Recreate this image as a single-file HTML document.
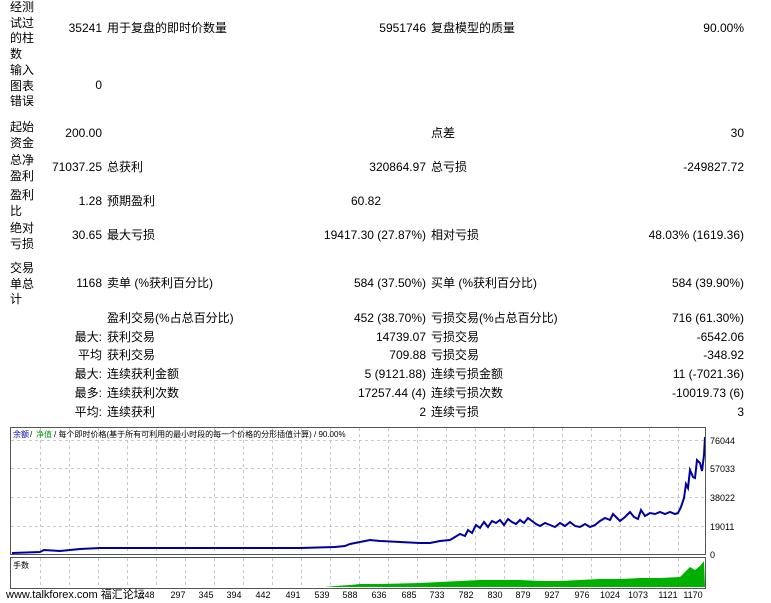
<!DOCTYPE html>
<html><head><meta charset="utf-8"><style>
body{margin:0;width:771px;height:603px;background:#fff;overflow:hidden;position:relative;font-family:"Liberation Sans","Noto Sans CJK SC",sans-serif;font-size:12px;color:#000}
div.t{position:absolute;white-space:nowrap;line-height:15px}
.r{text-align:right}
.s{font-size:9px;line-height:10px}
</style></head><body>
<div class="t" style="left:10px;top:0px;line-height:15.7px">经测<br>试过<br>的柱<br>数</div>
<div class="t r" style="right:669px;top:21px">35241</div>
<div class="t" style="left:107px;top:21px">用于复盘的即时价数量</div>
<div class="t r" style="right:345px;top:21px">5951746</div>
<div class="t" style="left:431px;top:21px">复盘模型的质量</div>
<div class="t r" style="right:27px;top:21px">90.00%</div>

<div class="t" style="left:10px;top:63px;line-height:15.5px">输入<br>图表<br>错误</div>
<div class="t r" style="right:669px;top:78px">0</div>

<div class="t" style="left:10px;top:119px;line-height:16px">起始<br>资金</div>
<div class="t r" style="right:669px;top:126px">200.00</div>
<div class="t" style="left:431px;top:126px">点差</div>
<div class="t r" style="right:27px;top:126px">30</div>

<div class="t" style="left:10px;top:152px;line-height:16px">总净<br>盈利</div>
<div class="t r" style="right:669px;top:160px">71037.25</div>
<div class="t" style="left:107px;top:160px">总获利</div>
<div class="t r" style="right:345px;top:160px">320864.97</div>
<div class="t" style="left:431px;top:160px">总亏损</div>
<div class="t r" style="right:27px;top:160px">-249827.72</div>

<div class="t" style="left:10px;top:187px;line-height:16px">盈利<br>比</div>
<div class="t r" style="right:669px;top:194px">1.28</div>
<div class="t" style="left:107px;top:194px">预期盈利</div>
<div class="t r" style="right:390px;top:194px">60.82</div>

<div class="t" style="left:10px;top:220px;line-height:16px">绝对<br>亏损</div>
<div class="t r" style="right:669px;top:228px">30.65</div>
<div class="t" style="left:107px;top:228px">最大亏损</div>
<div class="t r" style="right:345px;top:228px">19417.30 (27.87%)</div>
<div class="t" style="left:431px;top:228px">相对亏损</div>
<div class="t r" style="right:27px;top:228px">48.03% (1619.36)</div>

<div class="t" style="left:10px;top:261px;line-height:15.5px">交易<br>单总<br>计</div>
<div class="t r" style="right:669px;top:276px">1168</div>
<div class="t" style="left:107px;top:276px">卖单 (%获利百分比)</div>
<div class="t r" style="right:345px;top:276px">584 (37.50%)</div>
<div class="t" style="left:431px;top:276px">买单 (%获利百分比)</div>
<div class="t r" style="right:27px;top:276px">584 (39.90%)</div>

<div class="t" style="left:107px;top:311px">盈利交易(%占总百分比)</div>
<div class="t r" style="right:345px;top:311px">452 (38.70%)</div>
<div class="t" style="left:431px;top:311px">亏损交易(%占总百分比)</div>
<div class="t r" style="right:27px;top:311px">716 (61.30%)</div>

<div class="t r" style="right:669px;top:330px">最大:</div>
<div class="t" style="left:107px;top:330px">获利交易</div>
<div class="t r" style="right:345px;top:330px">14739.07</div>
<div class="t" style="left:431px;top:330px">亏损交易</div>
<div class="t r" style="right:27px;top:330px">-6542.06</div>

<div class="t r" style="right:669px;top:348px">平均</div>
<div class="t" style="left:107px;top:348px">获利交易</div>
<div class="t r" style="right:345px;top:348px">709.88</div>
<div class="t" style="left:431px;top:348px">亏损交易</div>
<div class="t r" style="right:27px;top:348px">-348.92</div>

<div class="t r" style="right:669px;top:367px">最大:</div>
<div class="t" style="left:107px;top:367px">连续获利金额</div>
<div class="t r" style="right:345px;top:367px">5 (9121.88)</div>
<div class="t" style="left:431px;top:367px">连续亏损金额</div>
<div class="t r" style="right:27px;top:367px">11 (-7021.36)</div>

<div class="t r" style="right:669px;top:386px">最多:</div>
<div class="t" style="left:107px;top:386px">连续获利次数</div>
<div class="t r" style="right:345px;top:386px">17257.44 (4)</div>
<div class="t" style="left:431px;top:386px">连续亏损次数</div>
<div class="t r" style="right:27px;top:386px">-10019.73 (6)</div>

<div class="t r" style="right:669px;top:405px">平均:</div>
<div class="t" style="left:107px;top:405px">连续获利</div>
<div class="t r" style="right:345px;top:405px">2</div>
<div class="t" style="left:431px;top:405px">连续亏损</div>
<div class="t r" style="right:27px;top:405px">3</div>

<svg style="position:absolute;left:0;top:0" width="771" height="603">
<g stroke="#c8c8c8" stroke-dasharray="3,3" stroke-width="1">
<path d="M11 440.5H705M11 468.5H705M11 497.5H705M11 526.5H705"/>
<path d="M40.5 428V553M69.5 428V553M98.5 428V553M127.5 428V553M156.5 428V553M185.5 428V553M214.5 428V553M243.5 428V553M272.5 428V553M301.5 428V553M330.5 428V553M359.5 428V553M388.5 428V553M417.5 428V553M446.5 428V553M475.5 428V553M504.5 428V553M533.5 428V553M562.5 428V553M591.5 428V553M620.5 428V553M649.5 428V553M678.5 428V553"/>
<path d="M40.5 558V587M69.5 558V587M98.5 558V587M127.5 558V587M156.5 558V587M185.5 558V587M214.5 558V587M243.5 558V587M272.5 558V587M301.5 558V587M330.5 558V587M359.5 558V587M388.5 558V587M417.5 558V587M446.5 558V587M475.5 558V587M504.5 558V587M533.5 558V587M562.5 558V587M591.5 558V587M620.5 558V587M649.5 558V587M678.5 558V587"/>
</g>
<polygon fill="#00b000" points="325,587 335,586 350,585 360,584 380,584 420,583 460,581 480,580 500,580 520,580 540,581 560,581 580,580 600,579 620,579 640,578 660,578 680,577 686,571 690,567 695,570 700,566 704,561 705,587"/>
<polyline fill="none" stroke="#0000a0" stroke-width="2" points="12,553 40,552 44,550 60,551 80,549 100,548 150,548 200,548 250,548 300,548 335,547 345,546 350,544 360,542 370,540 380,541 400,542 420,543 430,543 440,541 450,540 455,537 460,534 465,536 468,530 472,533 476,525 480,528 484,522 488,527 492,521 496,523 500,520 504,525 508,519 512,522 516,524 520,520 524,523 528,518 532,521 536,524 540,526 545,523 550,525 555,527 560,523 565,526 570,522 575,526 580,527 585,524 590,527 595,525 600,521 605,518 610,520 613,514 617,518 620,521 625,517 630,512 634,517 638,519 641,510 645,516 650,513 655,514 660,512 665,514 670,512 675,514 678,513 681,507 684,498 686,484 688,488 690,470 693,477 695,478 697,460 700,463 702,471 704,455 705,437"/>
<rect x="10.5" y="427.5" width="695" height="127" fill="none" stroke="#555"/>
<rect x="10.5" y="557.5" width="695" height="31" fill="none" stroke="#555"/>
<text x="13" y="437" font-size="8" fill="#0000b0" font-family="Liberation Sans,Noto Sans CJK SC,sans-serif">余额</text>
<text x="30" y="437" font-size="8" fill="#000" font-family="Liberation Sans,Noto Sans CJK SC,sans-serif">/</text>
<text x="36" y="437" font-size="8" fill="#00a000" font-family="Liberation Sans,Noto Sans CJK SC,sans-serif">净值</text>
<text x="54" y="437" font-size="8" fill="#000" font-family="Liberation Sans,Noto Sans CJK SC,sans-serif">/ 每个即时价格(基于所有可利用的最小时段的每一个价格的分形插值计算) / 90.00%</text>
<text x="13" y="568" font-size="8" font-family="Liberation Sans,Noto Sans CJK SC,sans-serif">手数</text>
<g font-size="9" font-family="Liberation Sans,sans-serif">
<text x="710" y="444">76044</text><text x="710" y="472">57033</text><text x="710" y="501">38022</text><text x="710" y="530">19011</text><text x="710" y="558">0</text>
</g>
<g font-size="9" font-family="Liberation Sans,sans-serif" text-anchor="middle">
<text x="147" y="598">248</text><text x="178" y="598">297</text><text x="206" y="598">345</text><text x="234" y="598">394</text><text x="263" y="598">442</text><text x="293" y="598">491</text><text x="322" y="598">539</text><text x="350" y="598">588</text><text x="379" y="598">636</text><text x="409" y="598">685</text><text x="437" y="598">733</text><text x="466" y="598">782</text><text x="495" y="598">830</text><text x="523" y="598">879</text><text x="552" y="598">927</text><text x="582" y="598">976</text><text x="610" y="598">1024</text><text x="638" y="598">1073</text><text x="668" y="598">1121</text><text x="693" y="598">1170</text>
</g>
<text x="6" y="598" font-size="11" font-family="Liberation Sans,Noto Sans CJK SC,sans-serif">www.talkforex.com 福汇论坛</text>
</svg>
</body></html>
